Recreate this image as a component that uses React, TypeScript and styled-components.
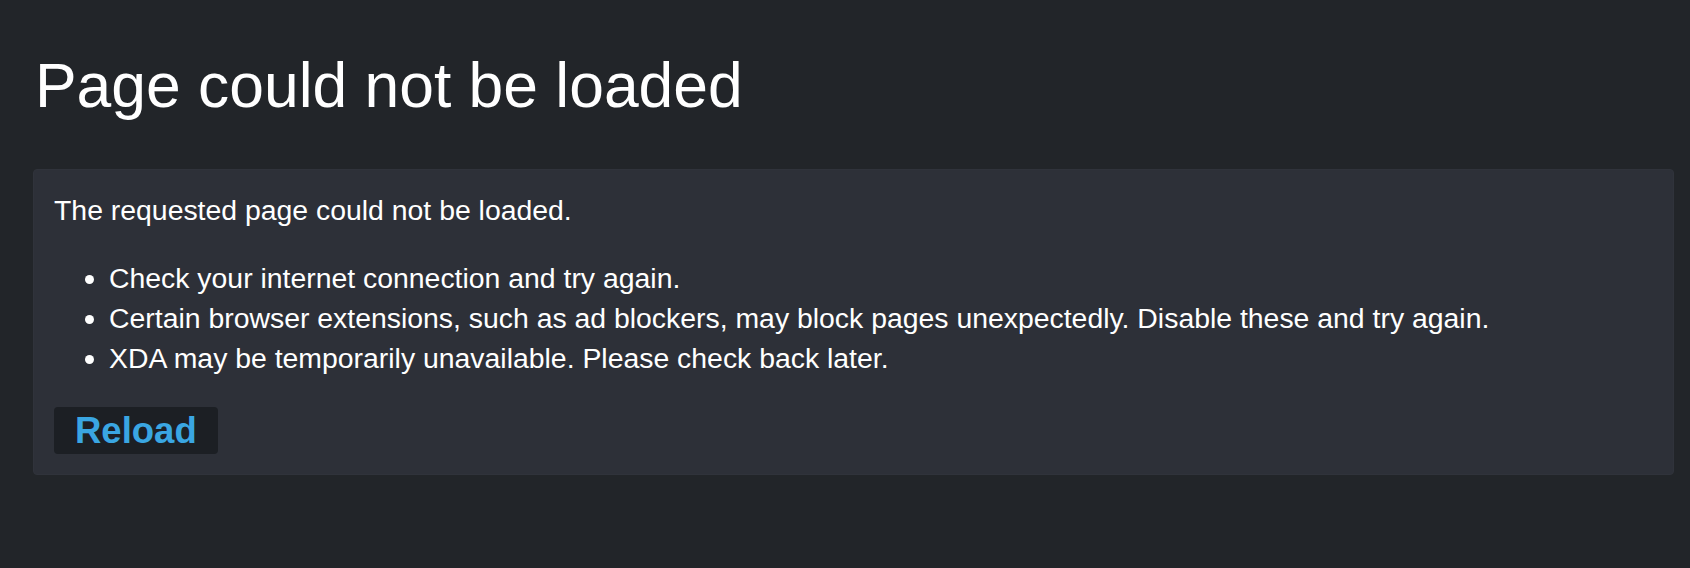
import React from "react";
import styled, { createGlobalStyle } from "styled-components";

const GlobalStyle = createGlobalStyle`
  html, body {
    margin: 0;
    padding: 0;
    background: #222529;
  }
  body {
    font-family: "Liberation Sans", Arial, sans-serif;
    color: #ffffff;
  }
`;

const Page = styled.main`
  min-height: 568px;
  box-sizing: border-box;
  padding: 50px 16px 0 33px;
  background: #222529;
`;

const Title = styled.h1`
  margin: 0 0 48px 2px;
  font-size: 62.4px;
  font-weight: 400;
  line-height: 71px;
  color: #ffffff;
`;

const Panel = styled.section`
  box-sizing: border-box;
  background: #2d3038;
  border: 1px solid #30333b;
  border-radius: 4px;
  padding: 20px;
`;

const Lead = styled.p`
  margin: 0;
  font-size: 28.4px;
  line-height: 40px;
`;

const List = styled.ul`
  margin: 28px 0 29px;
  padding-left: 55px;
  font-size: 28.4px;
  line-height: 40px;
`;

const ReloadButton = styled.button`
  display: inline-block;
  margin: 0;
  border: none;
  border-radius: 4px;
  background: #1c1f24;
  color: #3aa6e2;
  font-family: "Liberation Sans", Arial, sans-serif;
  font-weight: 700;
  font-size: 36.5px;
  line-height: 47px;
  height: 47px;
  padding: 0 21px 0 21px;
  cursor: pointer;
`;

export default function App() {
  return (
    <>
      <GlobalStyle />
      <Page>
        <Title>Page could not be loaded</Title>
        <Panel>
          <Lead>The requested page could not be loaded.</Lead>
          <List>
            <li>Check your internet connection and try again.</li>
            <li>
              Certain browser extensions, such as ad blockers, may block pages
              unexpectedly. Disable these and try again.
            </li>
            <li>XDA may be temporarily unavailable. Please check back later.</li>
          </List>
          <ReloadButton type="button">Reload</ReloadButton>
        </Panel>
      </Page>
    </>
  );
}
